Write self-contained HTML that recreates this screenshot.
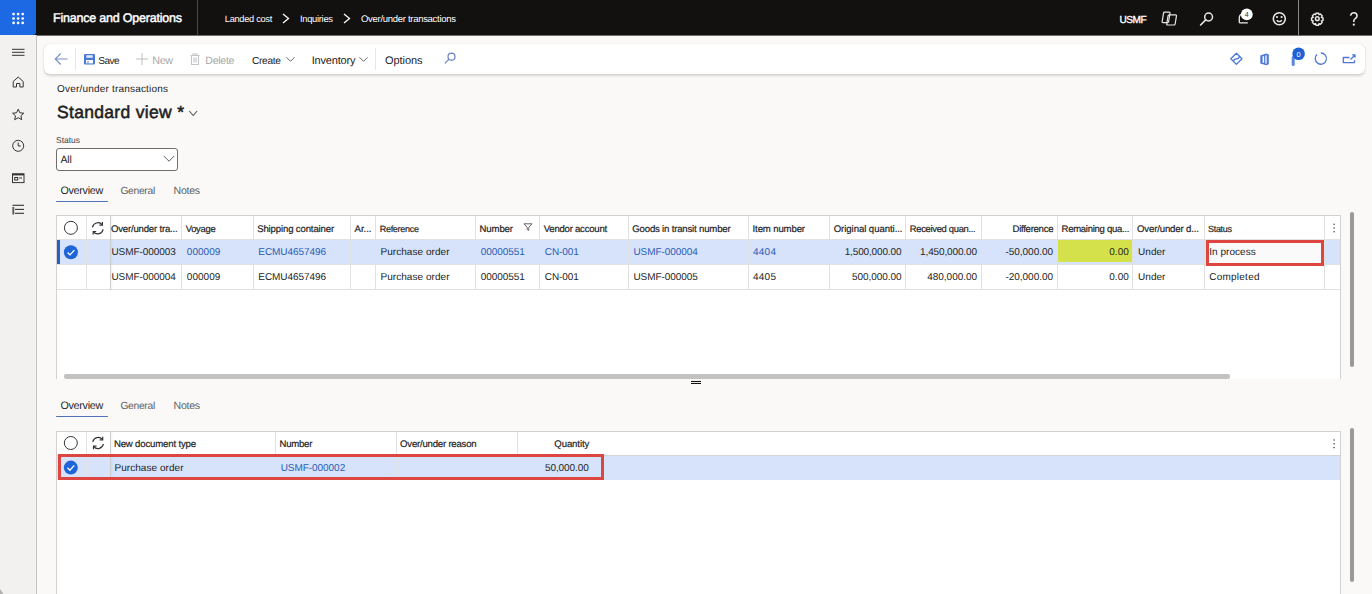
<!DOCTYPE html><html><head><meta charset="utf-8"><style>*{box-sizing:border-box;margin:0;padding:0}html,body{width:1372px;height:594px;overflow:hidden;background:#faf9f8;font-family:"Liberation Sans",sans-serif;position:relative}.b{position:absolute}.t{position:absolute;white-space:nowrap;line-height:30px;text-rendering:geometricPrecision}</style></head><body>
<div class="b" style="left:0px;top:0px;width:1372px;height:35px;background:#121110;box-shadow:0 1px 0 rgba(18,17,16,0.6);"></div>
<div class="b" style="left:0px;top:0px;width:36px;height:35px;background:#1d69e4;border-bottom-right-radius:3px;"></div>
<svg class="b" style="left:0;top:0" width="36" height="35"><circle cx="13.6" cy="14.1" r="1.35" fill="#fff"/><circle cx="18.1" cy="14.1" r="1.35" fill="#fff"/><circle cx="22.7" cy="14.1" r="1.35" fill="#fff"/><circle cx="13.6" cy="18.5" r="1.35" fill="#fff"/><circle cx="18.1" cy="18.5" r="1.35" fill="#fff"/><circle cx="22.7" cy="18.5" r="1.35" fill="#fff"/><circle cx="13.6" cy="22.9" r="1.35" fill="#fff"/><circle cx="18.1" cy="22.9" r="1.35" fill="#fff"/><circle cx="22.7" cy="22.9" r="1.35" fill="#fff"/></svg>
<div class="t" style="left:53.00px;top:2.90px;font-size:12.5px;color:#fff;letter-spacing:-0.210px;-webkit-text-stroke:0.45px #fff;">Finance and Operations</div>
<div class="b" style="left:197px;top:0px;width:1px;height:35px;background:#4a4a4a;"></div>
<div class="t" style="left:224.80px;top:4.30px;font-size:9.27px;color:#fff;letter-spacing:-0.302px;">Landed cost</div>
<div class="t" style="left:300.00px;top:4.30px;font-size:9.37px;color:#fff;letter-spacing:-0.302px;">Inquiries</div>
<div class="t" style="left:361.00px;top:5.30px;font-size:9.52px;color:#fff;letter-spacing:-0.300px;">Over/under transactions</div>
<svg class="b" style="left:0;top:0" width="1372" height="35"><polyline points="283,14 288.5,18.5 283,23" fill="none" stroke="#fff" stroke-width="1.3"/><polyline points="344,14 349.5,18.5 344,23" fill="none" stroke="#fff" stroke-width="1.3"/><g fill="none" stroke="#e6e6e6" stroke-width="1.2" stroke-linejoin="round"><path d="M1164.6,12.2 h4.6 q0.9,0 0.8,0.9 l-1.4,8.6 q-0.15,0.9 -1.05,0.9 h-4.6 q-0.9,0 -0.8,-0.9 l1.4,-8.6 q0.15,-0.9 1.05,-0.9z"/><path d="M1169.2,14.9 h6.4 q1,0 0.85,1 l-1.3,8.1 q-0.15,1 -1.15,1 h-6.4 q-1,0 -0.85,-1 l1.3,-8.1 q0.15,-1 1.15,-1z"/></g><circle cx="1208.6" cy="17" r="3.9" fill="none" stroke="#e8e8e8" stroke-width="1.5"/><line x1="1205.7" y1="19.9" x2="1200.6" y2="25" stroke="#e8e8e8" stroke-width="1.6" stroke-linecap="round"/><path d="M1239.3,22.8 v-5 q0,-3.5 3.5,-4 M1239.3,22.8 h8.5" fill="none" stroke="#eee" stroke-width="1.3"/><circle cx="1246.8" cy="14.4" r="5.9" fill="#fff"/><text x="1246.8" y="17" font-size="7" text-anchor="middle" fill="#333" font-family="Liberation Sans">4</text><circle cx="1279.3" cy="18.7" r="6" fill="none" stroke="#e8e8e8" stroke-width="1.6"/><circle cx="1277" cy="17" r="1.1" fill="#e8e8e8"/><circle cx="1281.6" cy="17" r="1.1" fill="#e8e8e8"/><path d="M1276.6,20.3 q2.7,2.6 5.4,0" fill="none" stroke="#e8e8e8" stroke-width="1.3"/><line x1="1298.5" y1="0" x2="1298.5" y2="35" stroke="#8a8a8a" stroke-width="1"/><g transform="translate(1317.3,18.7) scale(0.92)" fill="none" stroke="#e8e8e8" stroke-width="1.6"><path d="M-1.3,-6 h2.6 l0.6,1.6 l1.6,-0.6 l1.8,1.9 l-0.7,1.6 l1.6,0.7 v2.6 l-1.6,0.7 l0.7,1.6 l-1.8,1.9 l-1.6,-0.6 l-0.6,1.6 h-2.6 l-0.6,-1.6 l-1.6,0.6 l-1.8,-1.9 l0.7,-1.6 l-1.6,-0.7 v-2.6 l1.6,-0.7 l-0.7,-1.6 l1.8,-1.9 l1.6,0.6 z"/><circle r="2"/></g><path d="M1350.6,15.7 q0.5,-2.9 3.2,-2.9 q3.2,0 3.2,3 q0,1.8 -1.8,2.8 q-1.4,0.9 -1.4,2.6 v0.9" fill="none" stroke="#e8e8e8" stroke-width="1.6"/><circle cx="1353.8" cy="24.7" r="1.1" fill="#e8e8e8"/></svg>
<div class="t" style="left:1119.60px;top:6.00px;font-size:10.12px;color:#fff;letter-spacing:-0.555px;-webkit-text-stroke:0.35px #fff;">USMF</div>
<div class="b" style="left:0px;top:35px;width:36px;height:559px;background:#f2f1f0;"></div>
<div class="b" style="left:36px;top:35px;width:1px;height:559px;background:#c4c4c4;"></div>
<svg class="b" style="left:0;top:35px" width="36" height="200" fill="none" stroke="#333" stroke-width="1"><line x1="12" y1="14.3" x2="24.5" y2="14.3"/><line x1="12" y1="17.3" x2="24.5" y2="17.3"/><line x1="12" y1="20.3" x2="24.5" y2="20.3"/><path d="M13.2,46.5 l5,-4.5 l5,4.5 v5.5 h-3.3 v-3.5 h-3.4 v3.5 h-3.3 z"/><path d="M18.2,74.2 l1.7,3.6 l3.9,0.4 l-2.9,2.6 l0.8,3.9 l-3.5,-2 l-3.5,2 l0.8,-3.9 l-2.9,-2.6 l3.9,-0.4 z"/><circle cx="18.2" cy="110.8" r="5.5"/><path d="M18.2,107.5 v3.5 h2.6"/><rect x="12.5" y="138.8" width="11.5" height="8.8"/><line x1="12.5" y1="139.6" x2="24" y2="139.6" stroke-width="1.6"/><rect x="14.7" y="142.5" width="3" height="2.5"/><line x1="19.2" y1="143" x2="22" y2="143"/><line x1="12.5" y1="170.3" x2="24" y2="170.3" stroke-width="1.1"/><line x1="15" y1="174.4" x2="24" y2="174.4" stroke-width="1.1"/><line x1="15" y1="178.3" x2="24" y2="178.3" stroke-width="1.1"/><rect x="12.4" y="172" width="1.8" height="7.5" fill="#555" stroke="none"/></svg>
<svg class="b" style="left:0;top:584px" width="10" height="10"><path d="M0,5 L3.5,10 L0,10 z" fill="#b0b0b0"/></svg>
<div class="b" style="left:44px;top:44px;width:1321px;height:30px;background:#fff;border-radius:6px;box-shadow:0 1.5px 2.5px rgba(0,0,0,0.15),0 0 1px rgba(0,0,0,0.14)"></div>
<div class="b" style="left:75px;top:48px;width:1px;height:22px;background:#e6e6e6;"></div>
<div class="b" style="left:375px;top:48px;width:1px;height:22px;background:#e6e6e6;"></div>
<div class="t" style="left:98.30px;top:46.90px;font-size:10.12px;color:#242424;letter-spacing:-0.591px;">Save</div>
<div class="t" style="left:152.20px;top:45.90px;font-size:10.79px;color:#a8a8a8;letter-spacing:-0.303px;">New</div>
<div class="t" style="left:205.30px;top:45.90px;font-size:10.62px;color:#a8a8a8;letter-spacing:-0.298px;">Delete</div>
<div class="t" style="left:252.00px;top:46.90px;font-size:10.16px;color:#242424;letter-spacing:-0.301px;">Create</div>
<div class="t" style="left:311.70px;top:45.90px;font-size:11px;color:#242424;letter-spacing:-0.180px;">Inventory</div>
<div class="t" style="left:385.00px;top:45.90px;font-size:11px;color:#242424;letter-spacing:-0.070px;">Options</div>
<svg class="b" style="left:0;top:40px" width="1372" height="40"><g fill="none" stroke="#7690cc" stroke-width="1.1"><path d="M67.5,19 h-12.3 M60.7,13.5 l-5.5,5.5 l5.5,5.5"/></g><rect x="84" y="14" width="11" height="10.5" rx="1" fill="#4a78d8"/><rect x="86.3" y="15.2" width="6.4" height="2.6" fill="#dfe8fa"/><rect x="86" y="20" width="7" height="3.4" fill="#fff"/><rect x="87.5" y="21" width="1" height="2.4" fill="#4a78d8"/><g stroke="#c4c4c4" stroke-width="1.1"><line x1="136" y1="19" x2="148" y2="19"/><line x1="142" y1="13" x2="142" y2="25"/></g><g fill="none" stroke="#c4c4c4" stroke-width="1.1"><path d="M190.5,15.5 h9 M193,15.5 v-1.5 h4 v1.5 M191.5,15.5 v9 h7 v-9 M194,17.5 v5 M196,17.5 v5"/></g><polyline points="286.5,17.3 290.5,21.3 294.5,17.3" fill="none" stroke="#666" stroke-width="1"/><polyline points="359.5,17.3 363.5,21.3 367.5,17.3" fill="none" stroke="#666" stroke-width="1"/><g fill="none" stroke="#6b7fc4" stroke-width="1.2"><circle cx="451.5" cy="16.7" r="3.5"/><line x1="449" y1="19.2" x2="444.8" y2="23.4"/></g><g fill="none" stroke="#4e78d6" stroke-width="1.3" stroke-linejoin="round"><path d="M1236.4,13.2 l5.6,5.6 l-5.6,5.6 l-5.6,-5.6 z"/><path d="M1233.6,21.4 q0,-2.6 2.8,-2.6 q2.8,0 2.8,-2.6"/><path d="M1317,14.5 a5.6,5.6 0 1 0 3.8,-1.5"/><path d="M1349.5,17.5 h-6.2 v5.2 h11.2 v-2.5"/><path d="M1350.5,19.5 l4.2,-4.2 M1352.2,14.8 h2.8 v2.8"/></g><path d="M1260.3,15.4 l5.9,-1.9 l2.6,1 v9.8 l-2.6,1 l-5.9,-1.9 z" fill="#4e78d6"/><rect x="1262.6" y="16.2" width="1.5" height="6.6" fill="#fff"/><rect x="1265.2" y="15.4" width="1.6" height="8.2" fill="#dfe8fa"/><path d="M1293.2,17.5 v7" stroke="#5c86dc" stroke-width="3" stroke-linecap="round"/><circle cx="1298.6" cy="13.8" r="6.3" fill="#1f5fd6"/><text x="1298.6" y="16.6" font-size="7.5" text-anchor="middle" fill="#fff" font-family="Liberation Sans">0</text></svg>
<div class="t" style="left:57.00px;top:74.80px;font-size:10px;color:#242424;letter-spacing:0.194px;">Over/under transactions</div>
<div class="t" style="left:57.00px;top:96.60px;font-size:17.5px;color:#1f1f1f;letter-spacing:0.315px;-webkit-text-stroke:0.55px #1f1f1f;">Standard view *</div>
<svg class="b" style="left:0;top:100px" width="220" height="30"><polyline points="189.3,11 193.2,15.5 197.1,11" fill="none" stroke="#555" stroke-width="1.1"/></svg>
<div class="t" style="left:56.00px;top:124.70px;font-size:8.5px;color:#424242;letter-spacing:-0.020px;">Status</div>
<div class="b" style="left:56px;top:148px;width:122px;height:23px;background:#fff;border:1px solid #6e6e6e;border-radius:3px"></div>
<div class="t" style="left:60.50px;top:144.90px;font-size:10.5px;color:#242424;letter-spacing:-0.191px;">All</div>
<svg class="b" style="left:0;top:150px" width="200" height="20"><polyline points="163.8,6 169,11.2 174.2,6" fill="none" stroke="#555" stroke-width="0.95"/></svg>
<div class="t" style="left:60.50px;top:176.20px;font-size:10.74px;color:#242424;letter-spacing:-0.298px;">Overview</div>
<div class="t" style="left:120.40px;top:177.20px;font-size:10.29px;color:#616161;letter-spacing:-0.301px;">General</div>
<div class="t" style="left:173.60px;top:176.20px;font-size:10.6px;color:#616161;letter-spacing:-0.298px;">Notes</div>
<div class="b" style="left:56px;top:200.5px;width:52px;height:1.6px;background:#4f71b8;border-radius:1px;"></div>
<div class="t" style="left:60.50px;top:390.90px;font-size:10.74px;color:#242424;letter-spacing:-0.298px;">Overview</div>
<div class="t" style="left:120.40px;top:391.90px;font-size:10.29px;color:#616161;letter-spacing:-0.301px;">General</div>
<div class="t" style="left:173.60px;top:390.90px;font-size:10.6px;color:#616161;letter-spacing:-0.298px;">Notes</div>
<div class="b" style="left:56px;top:415.5px;width:52px;height:1.6px;background:#4f71b8;border-radius:1px;"></div>
<div class="b" style="left:56px;top:215px;width:1285px;height:164px;background:#fff;border:1px solid #d2d2d2;border-bottom:none"></div>
<div class="b" style="left:57px;top:240px;width:1283px;height:24px;background:#d6e3fa;"></div>
<div class="b" style="left:57px;top:239px;width:1283px;height:1px;background:#e1e1e1;"></div>
<div class="b" style="left:57px;top:264px;width:1283px;height:1px;background:#e1e1e1;"></div>
<div class="b" style="left:57px;top:289px;width:1283px;height:1px;background:#e1e1e1;"></div>
<div class="b" style="left:1058px;top:240px;width:74px;height:22px;background:#d5e14b;"></div>
<div class="b" style="left:86px;top:216px;width:1px;height:74px;background:#e1e1e1;"></div>
<div class="b" style="left:181px;top:216px;width:1px;height:74px;background:#e1e1e1;"></div>
<div class="b" style="left:253px;top:216px;width:1px;height:74px;background:#e1e1e1;"></div>
<div class="b" style="left:350px;top:216px;width:1px;height:74px;background:#e1e1e1;"></div>
<div class="b" style="left:375px;top:216px;width:1px;height:74px;background:#e1e1e1;"></div>
<div class="b" style="left:475px;top:216px;width:1px;height:74px;background:#e1e1e1;"></div>
<div class="b" style="left:539px;top:216px;width:1px;height:74px;background:#e1e1e1;"></div>
<div class="b" style="left:628px;top:216px;width:1px;height:74px;background:#e1e1e1;"></div>
<div class="b" style="left:748px;top:216px;width:1px;height:74px;background:#e1e1e1;"></div>
<div class="b" style="left:829px;top:216px;width:1px;height:74px;background:#e1e1e1;"></div>
<div class="b" style="left:905px;top:216px;width:1px;height:74px;background:#e1e1e1;"></div>
<div class="b" style="left:981px;top:216px;width:1px;height:74px;background:#e1e1e1;"></div>
<div class="b" style="left:1057px;top:216px;width:1px;height:74px;background:#e1e1e1;"></div>
<div class="b" style="left:1132px;top:216px;width:1px;height:74px;background:#e1e1e1;"></div>
<div class="b" style="left:1204px;top:216px;width:1px;height:74px;background:#e1e1e1;"></div>
<div class="b" style="left:1324px;top:216px;width:1px;height:74px;background:#e1e1e1;"></div>
<div class="b" style="left:110px;top:216px;width:1px;height:74px;background:#d0d0d0;box-shadow:1px 0 2px rgba(0,0,0,0.08);"></div>
<div class="b" style="left:57px;top:240px;width:3px;height:24px;background:#2b5fc4;"></div>
<svg class="b" style="left:0;top:0" width="1372" height="594"><circle cx="70.9" cy="227.8" r="6.5" fill="none" stroke="#333" stroke-width="1"/><g fill="none" stroke="#333" stroke-width="1.2"><path d="M92.5,227.3 a5.5,5.5 0 0 1 9.6,-2.6"/><path d="M103.1,229.3 a5.5,5.5 0 0 1 -9.6,2.6"/><path d="M102.39999999999999,222.10000000000002 v3 h-3"/><path d="M93.2,234.5 v-3 h3"/></g><circle cx="70.9" cy="252.3" r="7" fill="#2065d8"/><polyline points="67.60000000000001,252.5 70.0,254.9 74.4,250.10000000000002" fill="none" stroke="#fff" stroke-width="1.3"/><path d="M524,223.8 h8 l-3.2,3.6 v3 l-1.6,-0.8 v-2.2 z" fill="none" stroke="#555" stroke-width="0.9"/><circle cx="1334.1" cy="224.2" r="0.8" fill="#444"/><circle cx="1334.1" cy="228" r="0.8" fill="#444"/><circle cx="1334.1" cy="231.8" r="0.8" fill="#444"/></svg>
<div class="t" style="left:111.00px;top:215.30px;font-size:9.6px;color:#242424;letter-spacing:-0.199px;-webkit-text-stroke:0.2px #242424;">Over/under tra...</div>
<div class="t" style="left:185.70px;top:214.30px;font-size:9.44px;color:#242424;letter-spacing:-0.301px;-webkit-text-stroke:0.2px #242424;">Voyage</div>
<div class="t" style="left:257.20px;top:215.30px;font-size:9.6px;color:#242424;letter-spacing:-0.149px;-webkit-text-stroke:0.2px #242424;">Shipping container</div>
<div class="t" style="left:354.50px;top:215.30px;font-size:9.6px;color:#242424;letter-spacing:-0.016px;-webkit-text-stroke:0.2px #242424;">Ar...</div>
<div class="t" style="left:379.70px;top:214.30px;font-size:9.04px;color:#242424;letter-spacing:-0.302px;-webkit-text-stroke:0.2px #242424;">Reference</div>
<div class="t" style="left:479.60px;top:215.30px;font-size:9.6px;color:#242424;letter-spacing:-0.150px;-webkit-text-stroke:0.2px #242424;">Number</div>
<div class="t" style="left:543.70px;top:215.30px;font-size:9.6px;color:#242424;letter-spacing:-0.248px;-webkit-text-stroke:0.2px #242424;">Vendor account</div>
<div class="t" style="left:632.30px;top:215.30px;font-size:9.6px;color:#242424;letter-spacing:-0.184px;-webkit-text-stroke:0.2px #242424;">Goods in transit number</div>
<div class="t" style="left:752.60px;top:215.30px;font-size:9.6px;color:#242424;letter-spacing:-0.138px;-webkit-text-stroke:0.2px #242424;">Item number</div>
<div class="t" style="left:833.70px;top:215.30px;font-size:9.6px;color:#242424;letter-spacing:-0.060px;-webkit-text-stroke:0.2px #242424;">Original quanti...</div>
<div class="t" style="left:909.80px;top:214.30px;font-size:9.39px;color:#242424;letter-spacing:-0.298px;-webkit-text-stroke:0.2px #242424;">Received quan...</div>
<div class="t" style="left:1012.60px;top:215.30px;font-size:9.6px;color:#242424;letter-spacing:-0.298px;-webkit-text-stroke:0.2px #242424;">Difference</div>
<div class="t" style="left:1061.60px;top:215.30px;font-size:9.56px;color:#242424;letter-spacing:-0.298px;-webkit-text-stroke:0.2px #242424;">Remaining qua...</div>
<div class="t" style="left:1137.00px;top:215.30px;font-size:9.6px;color:#242424;letter-spacing:-0.152px;-webkit-text-stroke:0.2px #242424;">Over/under d...</div>
<div class="t" style="left:1208.00px;top:214.30px;font-size:8.99px;color:#242424;letter-spacing:-0.297px;-webkit-text-stroke:0.2px #242424;">Status</div>
<div class="t" style="left:111.40px;top:238.30px;font-size:10px;color:#242424;letter-spacing:-0.062px;">USMF-000003</div>
<div class="t" style="left:186.80px;top:238.30px;font-size:10px;color:#2a5bb5;letter-spacing:0.045px;">000009</div>
<div class="t" style="left:258.30px;top:238.30px;font-size:10px;color:#2a5bb5;letter-spacing:-0.058px;">ECMU4657496</div>
<div class="t" style="left:380.50px;top:238.30px;font-size:10px;color:#242424;letter-spacing:0.048px;">Purchase order</div>
<div class="t" style="left:480.70px;top:238.30px;font-size:10px;color:#2a5bb5;letter-spacing:-0.043px;">00000551</div>
<div class="t" style="left:544.80px;top:238.30px;font-size:10px;color:#2a5bb5;letter-spacing:-0.110px;">CN-001</div>
<div class="t" style="left:633.40px;top:238.30px;font-size:10px;color:#2a5bb5;letter-spacing:-0.053px;">USMF-000004</div>
<div class="t" style="left:753.00px;top:238.30px;font-size:10px;color:#2a5bb5;letter-spacing:0.250px;">4404</div>
<div class="t" style="left:844.70px;top:238.30px;font-size:10px;color:#242424;letter-spacing:-0.145px;">1,500,000.00</div>
<div class="t" style="left:920.10px;top:238.30px;font-size:10px;color:#242424;letter-spacing:-0.136px;">1,450,000.00</div>
<div class="t" style="left:1005.40px;top:238.30px;font-size:10px;color:#242424;letter-spacing:-0.014px;">-50,000.00</div>
<div class="t" style="left:1109.20px;top:238.30px;font-size:10px;color:#242424;letter-spacing:0.075px;">0.00</div>
<div class="t" style="left:1138.10px;top:238.30px;font-size:10px;color:#242424;letter-spacing:0.019px;">Under</div>
<div class="b" style="left:1205.5px;top:240px;width:118.5px;height:25.5px;background:#fafafa;border:3px solid #dc4540"></div>
<div class="t" style="left:1209.20px;top:238.30px;font-size:10px;color:#242424;letter-spacing:0.042px;">In process</div>
<div class="t" style="left:111.40px;top:263.00px;font-size:10px;color:#242424;letter-spacing:-0.062px;">USMF-000004</div>
<div class="t" style="left:186.80px;top:263.00px;font-size:10px;color:#242424;letter-spacing:0.045px;">000009</div>
<div class="t" style="left:258.30px;top:263.00px;font-size:10px;color:#242424;letter-spacing:-0.058px;">ECMU4657496</div>
<div class="t" style="left:380.50px;top:263.00px;font-size:10px;color:#242424;letter-spacing:0.048px;">Purchase order</div>
<div class="t" style="left:480.70px;top:263.00px;font-size:10px;color:#242424;letter-spacing:-0.043px;">00000551</div>
<div class="t" style="left:544.80px;top:263.00px;font-size:10px;color:#242424;letter-spacing:-0.110px;">CN-001</div>
<div class="t" style="left:633.40px;top:263.00px;font-size:10px;color:#242424;letter-spacing:-0.053px;">USMF-000005</div>
<div class="t" style="left:753.00px;top:263.00px;font-size:10px;color:#242424;letter-spacing:0.250px;">4405</div>
<div class="t" style="left:851.90px;top:263.00px;font-size:10px;color:#242424;letter-spacing:-0.050px;">500,000.00</div>
<div class="t" style="left:927.30px;top:263.00px;font-size:10px;color:#242424;letter-spacing:-0.039px;">480,000.00</div>
<div class="t" style="left:1005.40px;top:263.00px;font-size:10px;color:#242424;letter-spacing:-0.014px;">-20,000.00</div>
<div class="t" style="left:1109.20px;top:263.00px;font-size:10px;color:#242424;letter-spacing:0.075px;">0.00</div>
<div class="t" style="left:1138.10px;top:263.00px;font-size:10px;color:#242424;letter-spacing:0.019px;">Under</div>
<div class="t" style="left:1209.20px;top:263.00px;font-size:10px;color:#242424;letter-spacing:0.244px;">Completed</div>
<div class="b" style="left:64px;top:374px;width:1166px;height:4.5px;background:#c2c2c2;border-radius:2px;"></div>
<div class="b" style="left:1350px;top:212px;width:4px;height:154.5px;background:#999999;border-radius:2px;"></div>
<svg class="b" style="left:0;top:0" width="1372" height="594"><line x1="691" y1="381.5" x2="701" y2="381.5" stroke="#111" stroke-width="1.1"/><line x1="691" y1="383.5" x2="701" y2="383.5" stroke="#111" stroke-width="1"/></svg>
<div class="b" style="left:56px;top:431px;width:1285px;height:165px;background:#fff;border:1px solid #d2d2d2"></div>
<div class="b" style="left:57px;top:455px;width:1283px;height:24.6px;background:#d6e3fa;"></div>
<div class="b" style="left:57px;top:455px;width:1283px;height:1px;background:#d4d4d4;"></div>
<div class="b" style="left:86px;top:432px;width:1px;height:48px;background:#e1e1e1;"></div>
<div class="b" style="left:275px;top:432px;width:1px;height:48px;background:#e1e1e1;"></div>
<div class="b" style="left:396px;top:432px;width:1px;height:48px;background:#e1e1e1;"></div>
<div class="b" style="left:517px;top:432px;width:1px;height:48px;background:#e1e1e1;"></div>
<div class="b" style="left:110px;top:432px;width:1px;height:48px;background:#d0d0d0;box-shadow:1px 0 2px rgba(0,0,0,0.08);"></div>
<svg class="b" style="left:0;top:0" width="1372" height="594"><circle cx="70.8" cy="443" r="6.5" fill="none" stroke="#333" stroke-width="1"/><g fill="none" stroke="#333" stroke-width="1.2"><path d="M92.8,442 a5.5,5.5 0 0 1 9.6,-2.6"/><path d="M103.39999999999999,444 a5.5,5.5 0 0 1 -9.6,2.6"/><path d="M102.69999999999999,436.8 v3 h-3"/><path d="M93.5,449.2 v-3 h3"/></g><circle cx="70.8" cy="467.6" r="7" fill="#2065d8"/><polyline points="67.5,467.8 69.89999999999999,470.20000000000005 74.3,465.40000000000003" fill="none" stroke="#fff" stroke-width="1.3"/><circle cx="1334.1" cy="440" r="0.8" fill="#444"/><circle cx="1334.1" cy="443.8" r="0.8" fill="#444"/><circle cx="1334.1" cy="447.6" r="0.8" fill="#444"/></svg>
<div class="t" style="left:113.90px;top:430.30px;font-size:9.6px;color:#242424;letter-spacing:-0.165px;-webkit-text-stroke:0.2px #242424;">New document type</div>
<div class="t" style="left:279.60px;top:430.30px;font-size:9.6px;color:#242424;letter-spacing:-0.270px;-webkit-text-stroke:0.2px #242424;">Number</div>
<div class="t" style="left:400.10px;top:430.30px;font-size:9.6px;color:#242424;letter-spacing:-0.215px;-webkit-text-stroke:0.2px #242424;">Over/under reason</div>
<div class="t" style="left:554.30px;top:430.30px;font-size:9.6px;color:#242424;letter-spacing:-0.109px;-webkit-text-stroke:0.2px #242424;">Quantity</div>
<div class="t" style="left:114.50px;top:454.00px;font-size:10px;color:#242424;letter-spacing:0.048px;">Purchase order</div>
<div class="t" style="left:280.70px;top:454.00px;font-size:10px;color:#2a5bb5;letter-spacing:-0.053px;">USMF-000002</div>
<div class="t" style="left:544.90px;top:454.00px;font-size:10px;color:#242424;letter-spacing:-0.062px;">50,000.00</div>
<div class="b" style="left:57.5px;top:454px;width:546.5px;height:26px;border:3px solid #dc4540"></div>
<div class="b" style="left:1350px;top:428px;width:4px;height:154px;background:#999999;border-radius:2px;"></div>
</body></html>
